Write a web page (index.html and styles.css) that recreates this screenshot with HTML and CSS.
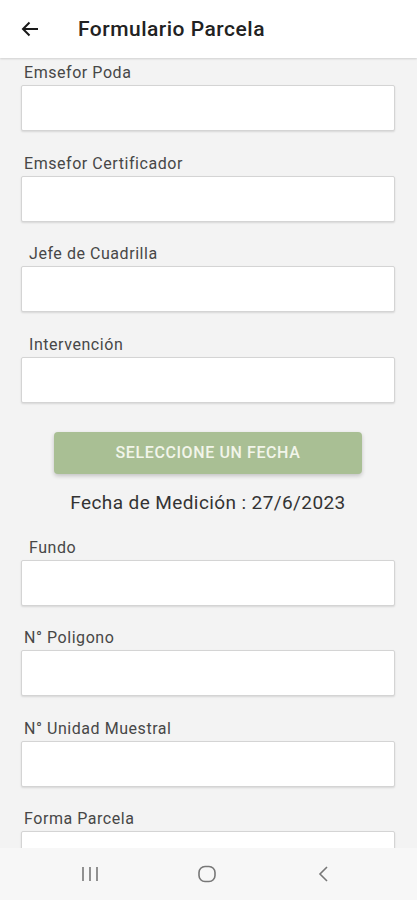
FILE: index.html
```html
<!DOCTYPE html>
<html lang="es">
<head>
    <meta charset="UTF-8">
    <meta name="viewport" content="width=device-width, initial-scale=1.0">
    <title>Formulario Parcela</title>
    <link rel="stylesheet" href="styles.css">
</head>
<body>
    <div class="app">
        <header class="topbar">
            <svg class="back" width="18" height="16" viewBox="0 0 18 16">
                <path d="M17 8H2M8.5 1.5L2 8l6.5 6.5" fill="none" stroke="#1a1a1a" stroke-width="2"/>
            </svg>
            <h1>Formulario Parcela</h1>
        </header>
        <main class="form">
            <div class="field">
                <label>Emsefor Poda</label>
                <input type="text">
            </div>
            <div class="field">
                <label>Emsefor Certificador</label>
                <input type="text">
            </div>
            <div class="field">
                <label class="indent">Jefe de Cuadrilla</label>
                <input type="text">
            </div>
            <div class="field">
                <label class="indent">Intervención</label>
                <input type="text">
            </div>
            <button class="date-btn">SELECCIONE UN FECHA</button>
            <p class="date-text">Fecha de Medición : 27/6/2023</p>
            <div class="field">
                <label class="indent">Fundo</label>
                <input type="text">
            </div>
            <div class="field">
                <label>N° Poligono</label>
                <input type="text">
            </div>
            <div class="field">
                <label>N° Unidad Muestral</label>
                <input type="text">
            </div>
            <div class="field">
                <label>Forma Parcela</label>
                <input type="text">
            </div>
        </main>
        <nav class="navbar">
            <svg width="18" height="16" viewBox="0 0 18 16">
                <path d="M2 1v14M9 1v14M16 1v14" stroke="#777" stroke-width="1.6"/>
            </svg>
            <svg width="20" height="18" viewBox="0 0 20 18">
                <rect x="2" y="1.5" width="16" height="15" rx="6" fill="none" stroke="#777" stroke-width="1.6"/>
            </svg>
            <svg width="14" height="18" viewBox="0 0 14 18">
                <path d="M10 2L3 9l7 7" fill="none" stroke="#777" stroke-width="1.6"/>
            </svg>
        </nav>
    </div>
</body>
</html>
```

FILE: styles.css
```css
body {
    margin: 0;
    font-family: Roboto, "Noto Sans", sans-serif;
    background: #f3f3f3;
}
.app {
    height: 900px;
    display: flex;
    flex-direction: column;
    overflow: hidden;
}
.topbar {
    height: 58px;
    flex: none;
    background: #fff;
    display: flex;
    align-items: center;
    padding-left: 21px;
    box-shadow: 0 1px 2px rgba(0, 0, 0, 0.15);
    position: relative;
    z-index: 1;
}
.topbar h1 {
    margin: 0 0 0 39px;
    font-size: 21px;
    font-weight: 500;
    letter-spacing: 0.5px;
    color: #222;
}
.form {
    flex: 1;
    overflow: hidden;
    padding: 4px 22px 0 21px;
}
.field {
    margin-bottom: 21.5px;
}
.field label {
    display: block;
    font-size: 16px;
    letter-spacing: 0.55px;
    line-height: 22px;
    color: #474747;
    padding-left: 3px;
    margin-bottom: 1px;
}
.field label.indent {
    padding-left: 8px;
}
.field input {
    display: block;
    box-sizing: border-box;
    width: 100%;
    height: 46px;
    border: 1px solid #d4d4d4;
    border-radius: 2px;
    background: #fff;
    box-shadow: 0 1px 2px rgba(0, 0, 0, 0.12);
}
.date-btn {
    display: block;
    width: 308px;
    height: 42px;
    margin: 29px 0 0 33px;
    border: none;
    border-radius: 4px;
    background: #a9bf94;
    color: #f2f5ea;
    font-family: Roboto, sans-serif;
    font-size: 16px;
    letter-spacing: 0.6px;
    font-weight: 500;
    box-shadow: 0 2px 4px rgba(0, 0, 0, 0.2);
}
.date-text {
    margin: 17px 0 22px;
    text-align: center;
    font-size: 19px;
    letter-spacing: 0.4px;
    line-height: 24px;
    color: #333;
}
.navbar {
    height: 52px;
    flex: none;
    background: #f7f7f7;
    display: grid;
    grid-template-columns: repeat(3, 117px);
    justify-items: center;
    align-items: center;
    padding-left: 31px;
}
```
